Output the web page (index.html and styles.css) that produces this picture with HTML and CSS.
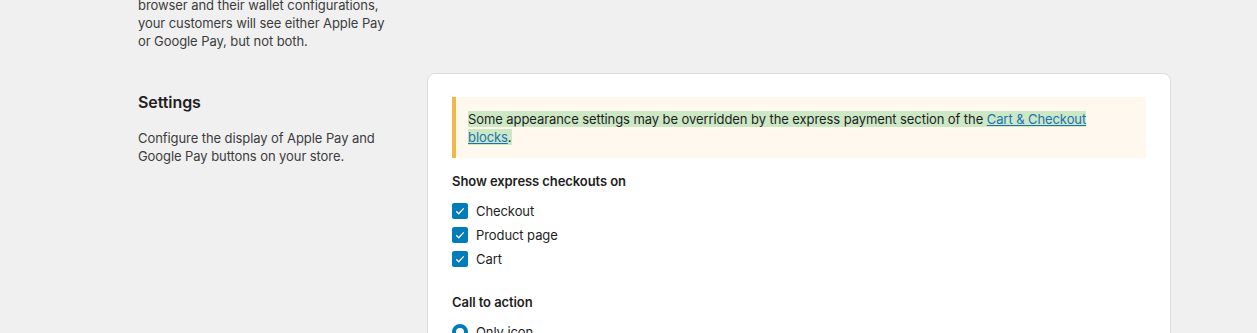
FILE: index.html
```html
<!DOCTYPE html>
<html lang="en">
<head>
    <meta charset="UTF-8">
    <meta name="viewport" content="width=device-width, initial-scale=1.0">
    <title>Express checkouts settings</title>
    <link rel="stylesheet" href="styles.css">
</head>
<body>

    <!-- intro text, scrolled partly out of view -->
    <div class="section intro">
        <div class="section-info">
            <p class="desc">
                Depending on your customers' device, browser and their wallet configurations,
                your customers will see either Apple Pay or Google Pay, but not both.
            </p>
        </div>
    </div>

    <!-- settings -->
    <div class="section">
        <div class="section-info">
            <h2 class="section-title">Settings</h2>
            <p class="desc">Configure the display of Apple Pay and Google Pay buttons on your store.</p>
        </div>

        <div class="card">
            <div class="notice">
                <span class="selected">Some appearance settings may be overridden by the express payment section of the <a href="#">Cart &amp; Checkout blocks</a>.</span>
            </div>

            <h3 class="field-title">Show express checkouts on</h3>
            <ul class="options">
                <li class="option"><span class="checkbox"><svg viewBox="0 0 16 16" width="16" height="16"><path d="M4.2 8.3l2.5 2.5 5-5.4" fill="none" stroke="#fff" stroke-width="1.3"/></svg></span>Checkout</li>
                <li class="option"><span class="checkbox"><svg viewBox="0 0 16 16" width="16" height="16"><path d="M4.2 8.3l2.5 2.5 5-5.4" fill="none" stroke="#fff" stroke-width="1.3"/></svg></span>Product page</li>
                <li class="option"><span class="checkbox"><svg viewBox="0 0 16 16" width="16" height="16"><path d="M4.2 8.3l2.5 2.5 5-5.4" fill="none" stroke="#fff" stroke-width="1.3"/></svg></span>Cart</li>
            </ul>

            <h3 class="field-title cta">Call to action</h3>
            <ul class="options">
                <li class="option"><span class="radio checked"></span>Only icon</li>
                <li class="option"><span class="radio"></span>Buy</li>
                <li class="option"><span class="radio"></span>Donate</li>
            </ul>
        </div>
    </div>

</body>
</html>
```

FILE: styles.css
```css
body {
    margin: 0;
    height: 333px;
    overflow: hidden;
    background-color: #f0f0f0;
    font-family: "Inter", "Liberation Sans", sans-serif;
    font-size: 13px;
    letter-spacing: -0.08px;
    color: #1e1e1e;
}

.section {
    display: grid;
    grid-template-columns: 289px 744px;
    padding-left: 138px;
}

.intro {
    margin-top: -22px;
    height: 95px;
}

.section-info {
    padding-right: 34px;
}

.desc {
    margin: 0;
    line-height: 18px;
    color: #3c3c3c;
}

.section-title {
    margin: 17px 0 15px;
    font-size: 16px;
    line-height: 24px;
    font-weight: 600;
}

.card {
    background: #fff;
    border: 1px solid #dcdcde;
    border-radius: 8px;
    padding: 23px 24px 40px;
    height: 400px;
}

/* warning notice */
.notice {
    background: #fef8ee;
    border-left: 4px solid #f0b849;
    padding: 13px 52px 12px 12px;
    line-height: 18px;
}

.selected {
    background: #cde8c5;
}

.notice a {
    color: #2271b1;
}

.field-title {
    margin: 14px 0 9px;
    font-size: 13px;
    line-height: 18px;
    font-weight: 600;
}

.field-title.cta {
    margin-top: 22px;
}

.options {
    list-style: none;
    margin: 0;
    padding: 0;
}

.option {
    display: flex;
    align-items: center;
    gap: 8px;
    height: 24px;
}

.checkbox {
    display: block;
    width: 16px;
    height: 16px;
    border-radius: 2px;
    background: #007cba;
}

.checkbox svg {
    display: block;
}

.radio {
    display: block;
    box-sizing: border-box;
    width: 16px;
    height: 16px;
    border-radius: 50%;
    border: 1px solid #1e1e1e;
}

.radio.checked {
    border: 4.5px solid #007cba;
}
```
